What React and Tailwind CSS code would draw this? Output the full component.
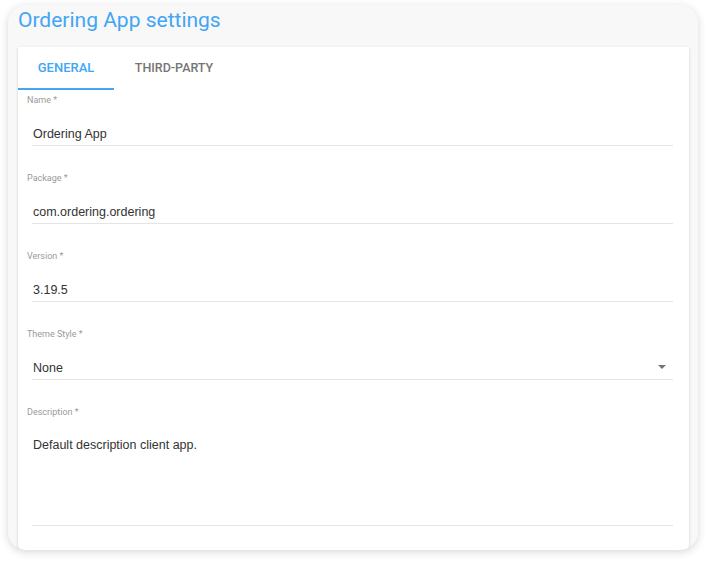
import React from "react";

function Field({ label, value, select }) {
  return (
    <div className="pt-[4px] pb-[22px]">
      <div className="h-[12px] pl-[9px] text-[9px] leading-[12px] text-[#9a9a9a]">{label}</div>
      <div className="mt-[17px] ml-[14px] mr-[16px] border-b border-[#e4e4e4] pb-[2px] flex items-center justify-between">
        <span className="pl-[1px] pt-[1px] h-[20px] font-['Liberation_Sans',Arial,sans-serif] text-[12.5px] leading-[20px] text-[#333]">{value}</span>
        {select && (
          <svg width="10" height="6" viewBox="0 0 10 6" className="mr-[6px]">
            <path d="M1 1h8L5 5z" fill="#757575" />
          </svg>
        )}
      </div>
    </div>
  );
}

export default function App() {
  return (
    <div className="h-[562px] w-[706px] bg-white font-['Roboto',sans-serif] pt-[5px] pl-[8px]">
      <div className="w-[690px] h-[545px] rounded-[18px] bg-[#f8f8f8] shadow-[0_2px_8px_rgba(0,0,0,0.16)] overflow-hidden flex flex-col">
        <div className="pl-[10px] pt-[1px] h-[42px] text-[21px] leading-[28px] text-[#42a5f5]">Ordering App settings</div>
        <div className="ml-[10px] mr-[9px] flex-1 bg-white rounded-b-[5px] shadow-[0_1px_3px_rgba(0,0,0,0.18)]">
          <div className="flex h-[43px]">
            <div className="w-[96px] pt-[1px] flex items-center justify-center text-[13px] font-medium text-[#42a5f5] border-b-2 border-[#42a5f5]">GENERAL</div>
            <div className="w-[120px] pt-[1px] pb-[2px] flex items-center justify-center text-[12.5px] font-medium text-[#757575]">THIRD-PARTY</div>
          </div>
          <Field label="Name *" value="Ordering App" />
          <Field label="Package *" value="com.ordering.ordering" />
          <Field label="Version *" value="3.19.5" />
          <Field label="Theme Style *" value="None" select />
          <div className="pt-[4px]">
            <div className="h-[12px] pl-[9px] text-[9px] leading-[12px] text-[#9a9a9a]">Description *</div>
            <div className="mt-[16px] ml-[14px] mr-[16px] h-[92px] border-b border-[#e4e4e4]">
              <span className="pl-[1px] pt-[1px] block font-['Liberation_Sans',Arial,sans-serif] text-[12.5px] leading-[20px] text-[#333]">Default description client app.</span>
            </div>
          </div>
        </div>
      </div>
    </div>
  );
}
